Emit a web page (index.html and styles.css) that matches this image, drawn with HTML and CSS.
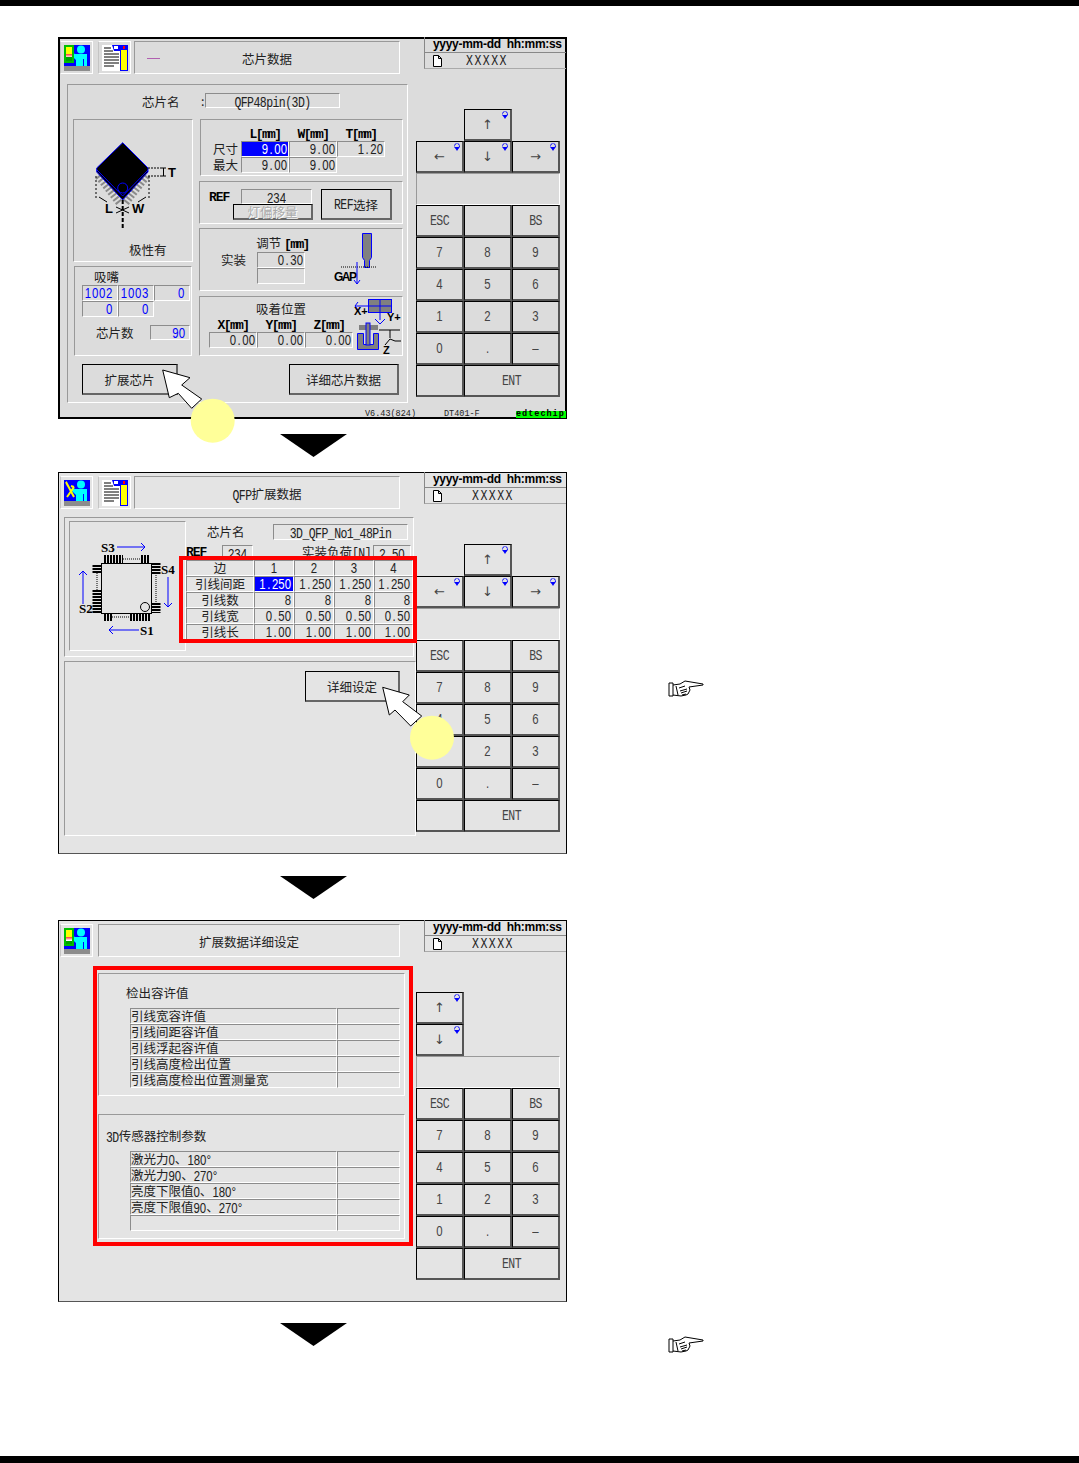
FILE: index.html
```html
<!DOCTYPE html>
<html>
    <head>
        <meta charset="utf-8" />
        <title>QFP扩展数据</title>
        <meta name="viewport" content="width=device-width, initial-scale=1.0" />
        <link rel="stylesheet" href="styles.css">
    </head>

    <body>
        <svg class="defs" width="0" height="0">
            <symbol id="person" viewBox="0 0 26 26">
                <rect width="26" height="21" fill="#0000ff" />
                <rect y="21" width="26" height="5" fill="#8c8c8c" />
                <circle cx="17" cy="4.5" r="4" fill="#00ffff" />
                <path d="M11 9h12v12h-3v-7h-1v7h-7v-6l-5-5 2-2z" fill="#00ffff" />
            </symbol>
            <symbol id="doc" viewBox="0 0 26 26">
                <rect width="26" height="26" fill="#fff" />
                <path d="M2 3h7M2 6h9M2 9h15M2 12h15M2 15h15M2 18h15M2 21h10" stroke="#000" />
                <rect x="18" y="0" width="8" height="26" fill="#0000ff" />
                <path d="M10 0h8v6h-6z" fill="#0000ff" />
                <path d="M12 1h4v3h-4z" fill="#fff" />
                <rect x="19" y="5" width="6" height="20" fill="#ffff00" />
                <rect x="21" y="1" width="2" height="3" fill="#ff0000" />
            </symbol>
            <symbol id="spin" viewBox="0 0 8 8">
                <circle cx="4" cy="3" r="2.500" fill="none" stroke="#0000ff" stroke-dasharray="3 1" />
                <path d="M1.500 4h5L4 8z" fill="#0000ff" />
            </symbol>
            <symbol id="hand" viewBox="0 0 36 18">
                <path d="M1 3h4v13H1z M5 5l7-1 5-3 18 3v1l-14 2 1 3-1 2-1 2-2 1-5 1-8-1"
                    fill="#fff" stroke="#000" stroke-width="1" />
                <path d="M11 8l6-2M12 11l7-2M13 13l6-2M14 15l4-1M8 6l2 9" fill="none" stroke="#000" />
            </symbol>
        </svg>

        <div class="page">
            <div class="bar"></div>

            <!-- 芯片数据 -->
            <section class="screen screen-dark">
                <header class="head">
                    <div class="icon-btn">
                        <svg class="icon" width="26" height="26"><use href="#person" /></svg>
                        <i class="tool tool-panel"></i>
                    </div>
                    <div class="icon-btn">
                        <svg class="icon" width="26" height="26"><use href="#doc" /></svg>
                    </div>
                    <div class="title title-dash"><i class="dash"></i><span>芯片数据</span></div>
                    <div class="status">
                        <div class="status-date">yyyy-mm-dd&nbsp;&nbsp;hh:mm:ss</div>
                        <div class="status-file">
                            <svg class="file" width="11" height="12" viewBox="0 0 11 12"><path d="M1.5.5h5l3 3v8h-8z M6.5.5v3h3" fill="#fff" stroke="#000" /></svg>
                            <span class="n xxxxx xxxxx-first">XXXXX</span>
                        </div>
                    </div>
                </header>

                <div class="body">
                    <div class="pane">
                        <div class="panel panel-main">
                            <div class="name-row">
                                <span class="name-label">芯片名</span>
                                <span class="colon">:</span>
                                <span class="sunk name-field"><span class="n">QFP48pin(3D)</span></span>
                            </div>
                            <div class="columns">
                                <div class="col-left">
                                    <div class="panel chip-box">
                                        <svg class="chip-art" width="118" height="110" viewBox="0 0 118 110">
                                            <path d="M24 56l22 28M73 56L51 84" stroke="#8a8a8a" stroke-width="7" stroke-dasharray="2 2" />
                                            <path d="M48.7 22.7L74 48v4L48.7 80 22.7 52v-4z" fill="#000" stroke="#0000ff" />
                                            <path d="M23 50l25.7 26L74 50" fill="none" stroke="#0000ff" />
                                            <circle cx="48.7" cy="68" r="5" fill="none" stroke="#0000ff" />
                                            <path d="M74 48h13M74 56h13" stroke="#000" stroke-dasharray="2 1" />
                                            <path d="M87 48h5M87 56h5M89.500 48v8" stroke="#000" />
                                            <text class="art-bold" x="94" y="57">T</text>
                                            <path d="M22 56v22M75 56v22" stroke="#000" stroke-dasharray="2 2" />
                                            <path d="M25 77l8 5M72 77l-8 5" stroke="#000" />
                                            <path d="M48.700 80v30" stroke="#000" stroke-width="2" stroke-dasharray="4 2" />
                                            <path d="M42 87l13 6M55 87l-13 6" stroke="#000" />
                                            <text class="art-bold" x="31" y="93">L</text>
                                            <text class="art-bold art-tight" x="58" y="93">W</text>
                                        </svg>
                                        <div class="chip-label">极性有</div>
                                    </div>
                                    <div class="panel nozzle-box">
                                        <div class="nozzle-label">吸嘴</div>
                                        <div class="nozzle-grid">
                                            <span class="sunk cell blue"><span class="d">1002</span></span>
                                            <span class="sunk cell blue"><span class="d">1003</span></span>
                                            <span class="sunk cell blue"><span class="d">0</span></span>
                                            <span class="sunk cell blue"><span class="d">0</span></span>
                                            <span class="sunk cell blue"><span class="d">0</span></span>
                                        </div>
                                        <div class="count-row">
                                            <span class="count-label">芯片数</span>
                                            <span class="sunk cell count-field blue"><span class="d">90</span></span>
                                        </div>
                                    </div>
                                </div>
                                <div class="col-right">
                                    <div class="panel size-box">
                                        <span></span>
                                        <span class="col-head">L[mm]</span>
                                        <span class="col-head">W[mm]</span>
                                        <span class="col-head">T[mm]</span>
                                        <span class="row-label">尺寸</span>
                                        <span class="sunk cell selected"><span class="d">9<i class="dot">.</i>00</span></span>
                                        <span class="sunk cell"><span class="d">9<i class="dot">.</i>00</span></span>
                                        <span class="sunk cell"><span class="d">1<i class="dot">.</i>20</span></span>
                                        <span class="row-label">最大</span>
                                        <span class="sunk cell"><span class="d">9<i class="dot">.</i>00</span></span>
                                        <span class="sunk cell"><span class="d">9<i class="dot">.</i>00</span></span>
                                    </div>
                                    <div class="panel ref-box">
                                        <span class="ref-label">REF</span>
                                        <div class="ref-stack">
                                            <span class="sunk ref-field"><span class="d">234</span></span>
                                            <span class="btn btn-off">灯偏移量</span>
                                        </div>
                                        <span class="btn ref-btn"><span class="n">REF</span>选择</span>
                                    </div>
                                    <div class="panel adj-box">
                                        <span class="adj-head">调节 <b class="unit">[mm]</b></span>
                                        <svg class="adj-art" width="97" height="61" viewBox="0 0 97 61">
                                            <path d="M57.500 4.500h9v24l-2 3v7h-5v-7l-2-3z" fill="#808080" stroke="#0000ff" />
                                            <path d="M36 38h35" stroke="#000" stroke-dasharray="1 1" />
                                            <text class="art-bold art-gap" x="29" y="52">GAP</text>
                                            <path d="M52 33v22M49 51l3 4 3-4" fill="none" stroke="#0000ff" />
                                        </svg>
                                        <span class="adj-label">实装</span>
                                        <span class="sunk cell"><span class="d">0<i class="dot">.</i>30</span></span>
                                        <span class="sunk cell adj-empty"></span>
                                    </div>
                                    <div class="panel pos-box">
                                        <span class="pos-head">吸着位置</span>
                                        <svg class="pos-art" width="49" height="58" viewBox="0 0 49 58">
                                            <rect x="15.500" y="2.500" width="23" height="13" fill="#808080" stroke="#0000ff" />
                                            <path d="M27 2v21M15 9h24M2 9h13M5 5L2 9l3 4M27 27l-5-5M27 27l5-5" fill="none" stroke="#0000ff" />
                                            <text class="art-bold art-small" x="1" y="18">X+</text>
                                            <text class="art-bold art-small" x="34" y="24">Y+</text>
                                            <rect x="6.500" y="28.500" width="18" height="4" fill="#808080" stroke="#808080" />
                                            <path d="M4.500 36.500h6v11h10v-11h5v16h-21z" fill="#808080" stroke="#0000ff" />
                                            <rect x="13" y="26" width="4" height="22" fill="#808080" stroke="#0000ff" />
                                            <path d="M26 33h21M37 33v8M37 42l-5 6M37 42l5 2h6" fill="none" stroke="#000" />
                                            <text class="art-bold art-small" x="30" y="57">Z</text>
                                        </svg>
                                        <span class="col-head">X[mm]</span>
                                        <span class="col-head">Y[mm]</span>
                                        <span class="col-head">Z[mm]</span>
                                        <span class="sunk cell"><span class="d">0<i class="dot">.</i>00</span></span>
                                        <span class="sunk cell"><span class="d">0<i class="dot">.</i>00</span></span>
                                        <span class="sunk cell"><span class="d">0<i class="dot">.</i>00</span></span>
                                    </div>
                                </div>
                            </div>
                            <div class="btn-row">
                                <span class="btn btn-ext">扩展芯片</span>
                                <span class="btn btn-detail">详细芯片数据</span>
                            </div>
                        </div>
                    </div>
                    <div class="keypad">
                        <span class="key key-up"><span class="glyph">↑</span><svg class="spin" width="8" height="8"><use href="#spin" /></svg></span>
                        <span class="key key-first"><span class="glyph">←</span><svg class="spin" width="8" height="8"><use href="#spin" /></svg></span>
                        <span class="key"><span class="glyph">↓</span><svg class="spin" width="8" height="8"><use href="#spin" /></svg></span>
                        <span class="key"><span class="glyph">→</span><svg class="spin" width="8" height="8"><use href="#spin" /></svg></span>
                        <span class="key-blank"></span>
                        <span class="key"><span class="n">ESC</span></span><span class="key"></span><span class="key"><span class="n">BS</span></span>
                        <span class="key"><span class="d">7</span></span><span class="key"><span class="d">8</span></span><span class="key"><span class="d">9</span></span>
                        <span class="key"><span class="d">4</span></span><span class="key"><span class="d">5</span></span><span class="key"><span class="d">6</span></span>
                        <span class="key"><span class="d">1</span></span><span class="key"><span class="d">2</span></span><span class="key"><span class="d">3</span></span>
                        <span class="key"><span class="d">0</span></span><span class="key"><span class="d">.</span></span><span class="key"><span class="d">–</span></span>
                        <span class="key"></span><span class="key key-ent"><span class="n">ENT</span></span>
                    </div>
                </div>

                <footer class="foot">
                    <span class="foot-ver">V6.43(824)</span>
                    <span class="foot-model">DT401-F</span>
                    <span class="foot-tag">edtechip</span>
                </footer>

                <svg class="pointer pointer-ext" width="80" height="78" viewBox="0 0 80 78">
                    <path d="M3.700 4L31 11.700 22.700 19 42.700 33 32.700 42.300 19.300 27.300 10.300 31.700z" fill="#fff" stroke="#000" />
                    <circle cx="53.700" cy="54.700" r="22" fill="#ffff99" />
                </svg>
            </section>

            <div class="arrow-row"><i class="arrow arrow-a"></i></div>

            <!-- QFP扩展数据 -->
            <div class="step">
                <section class="screen">
                    <header class="head">
                        <div class="icon-btn">
                            <svg class="icon" width="26" height="26"><use href="#person" /></svg>
                            <svg class="wrench" width="10" height="18" viewBox="0 0 10 18"><path d="M1 1l8 15M9 6L2 16M1 1l2 4M9 6l-3-1" stroke="#ffff00" stroke-width="2" fill="none" /></svg>
                        </div>
                        <div class="icon-btn">
                            <svg class="icon" width="26" height="26"><use href="#doc" /></svg>
                        </div>
                        <div class="title"><span><span class="n">QFP</span>扩展数据</span></div>
                        <div class="status">
                            <div class="status-date">yyyy-mm-dd&nbsp;&nbsp;hh:mm:ss</div>
                            <div class="status-file">
                                <svg class="file" width="11" height="12" viewBox="0 0 11 12"><path d="M1.5.5h5l3 3v8h-8z M6.5.5v3h3" fill="#fff" stroke="#000" /></svg>
                                <span class="n xxxxx">XXXXX</span>
                            </div>
                        </div>
                    </header>

                    <div class="body">
                        <div class="pane">
                            <div class="panel panel-qfp">
                                <div class="panel qfp-art-box">
                                    <svg width="115" height="128" viewBox="0 0 115 128">
                                        <rect x="31.500" y="41.500" width="50" height="50" fill="#e4e4e4" stroke="#000" />
                                        <path d="M34 37h19M71 37h9M34 95h8M60 95h20" stroke="#000" stroke-width="8" stroke-dasharray="2 1" />
                                        <path d="M53 37h18M42 95h18" stroke="#000" stroke-dasharray="1 1" />
                                        <path d="M27 43v8M27 68v23M86 41v12M86 81v10" stroke="#000" stroke-width="9" stroke-dasharray="2 1" />
                                        <path d="M27 51v17M86 53v28" stroke="#000" stroke-dasharray="1 1" />
                                        <circle cx="75" cy="85" r="4.500" fill="none" stroke="#000" />
                                        <path d="M47 25h28M71 21l4 4-4 4M69 108H39M43 104l-4 4 4 4M13 82V49M9 53l4-4 4 4M98 55v30M94 81l4 4 4-4" fill="none" stroke="#0000ff" />
                                        <text class="art-serif" x="31" y="30">S3</text>
                                        <text class="art-serif" x="91" y="52">S4</text>
                                        <text class="art-serif" x="9" y="91">S2</text>
                                        <text class="art-serif" x="70" y="113">S1</text>
                                    </svg>
                                </div>
                                <div class="qfp-data">
                                    <div class="qfp-name">
                                        <span class="qfp-name-label">芯片名</span>
                                        <span class="sunk qfp-name-field"><span class="n">3D_QFP_No1_48Pin</span></span>
                                    </div>
                                    <div class="qfp-ref">
                                        <b class="qfp-ref-label">REF</b>
                                        <span class="sunk qfp-ref-field"><span class="d">234</span></span>
                                        <span class="qfp-load-label">实装负荷<span class="n">[N]</span></span>
                                        <span class="sunk qfp-load-field"><span class="d">2<i class="dot">.</i>50</span></span>
                                    </div>
                                    <div class="lead-table">
                                        <span class="sunk cell center">边</span>
                                        <span class="sunk cell center"><span class="d">1</span></span>
                                        <span class="sunk cell center"><span class="d">2</span></span>
                                        <span class="sunk cell center"><span class="d">3</span></span>
                                        <span class="sunk cell center"><span class="d">4</span></span>
                                        <span class="sunk cell center">引线间距</span>
                                        <span class="sunk cell selected"><span class="d">1<i class="dot">.</i>250</span></span>
                                        <span class="sunk cell"><span class="d">1<i class="dot">.</i>250</span></span>
                                        <span class="sunk cell"><span class="d">1<i class="dot">.</i>250</span></span>
                                        <span class="sunk cell"><span class="d">1<i class="dot">.</i>250</span></span>
                                        <span class="sunk cell center">引线数</span>
                                        <span class="sunk cell"><span class="d">8</span></span>
                                        <span class="sunk cell"><span class="d">8</span></span>
                                        <span class="sunk cell"><span class="d">8</span></span>
                                        <span class="sunk cell"><span class="d">8</span></span>
                                        <span class="sunk cell center">引线宽</span>
                                        <span class="sunk cell"><span class="d">0<i class="dot">.</i>50</span></span>
                                        <span class="sunk cell"><span class="d">0<i class="dot">.</i>50</span></span>
                                        <span class="sunk cell"><span class="d">0<i class="dot">.</i>50</span></span>
                                        <span class="sunk cell"><span class="d">0<i class="dot">.</i>50</span></span>
                                        <span class="sunk cell center">引线长</span>
                                        <span class="sunk cell"><span class="d">1<i class="dot">.</i>00</span></span>
                                        <span class="sunk cell"><span class="d">1<i class="dot">.</i>00</span></span>
                                        <span class="sunk cell"><span class="d">1<i class="dot">.</i>00</span></span>
                                        <span class="sunk cell"><span class="d">1<i class="dot">.</i>00</span></span>
                                    </div>
                                </div>
                            </div>
                            <div class="panel panel-lower">
                                <span class="btn btn-set">详细设定</span>
                            </div>
                        </div>
                        <div class="keypad">
                            <span class="key key-up"><span class="glyph">↑</span><svg class="spin" width="8" height="8"><use href="#spin" /></svg></span>
                            <span class="key key-first"><span class="glyph">←</span><svg class="spin" width="8" height="8"><use href="#spin" /></svg></span>
                            <span class="key"><span class="glyph">↓</span><svg class="spin" width="8" height="8"><use href="#spin" /></svg></span>
                            <span class="key"><span class="glyph">→</span><svg class="spin" width="8" height="8"><use href="#spin" /></svg></span>
                            <span class="key-blank"></span>
                            <span class="key"><span class="n">ESC</span></span><span class="key"></span><span class="key"><span class="n">BS</span></span>
                            <span class="key"><span class="d">7</span></span><span class="key"><span class="d">8</span></span><span class="key"><span class="d">9</span></span>
                            <span class="key"><span class="d">4</span></span><span class="key"><span class="d">5</span></span><span class="key"><span class="d">6</span></span>
                            <span class="key"><span class="d">1</span></span><span class="key"><span class="d">2</span></span><span class="key"><span class="d">3</span></span>
                            <span class="key"><span class="d">0</span></span><span class="key"><span class="d">.</span></span><span class="key"><span class="d">–</span></span>
                            <span class="key"></span><span class="key key-ent"><span class="n">ENT</span></span>
                        </div>
                    </div>

                    <i class="frame frame-table"></i>
                    <svg class="pointer pointer-set" width="80" height="78" viewBox="0 0 80 78">
                        <path d="M3.700 3.300L30.300 11 23.700 17.700 42.700 32 31.700 42 16 26 10.300 31z" fill="#fff" stroke="#000" />
                        <circle cx="53" cy="53.700" r="22" fill="#ffff99" />
                    </svg>
                </section>
                <svg class="hand hand-step" width="36" height="18"><use href="#hand" /></svg>
            </div>

            <div class="arrow-row"><i class="arrow arrow-b"></i></div>

            <!-- 扩展数据详细设定 -->
            <section class="screen screen-last">
                <header class="head">
                    <div class="icon-btn">
                        <svg class="icon" width="26" height="26"><use href="#person" /></svg>
                        <i class="tool tool-panel"></i>
                    </div>
                    <div class="title title-wide"><span>扩展数据详细设定</span></div>
                    <div class="status">
                        <div class="status-date">yyyy-mm-dd&nbsp;&nbsp;hh:mm:ss</div>
                        <div class="status-file">
                            <svg class="file" width="11" height="12" viewBox="0 0 11 12"><path d="M1.5.5h5l3 3v8h-8z M6.5.5v3h3" fill="#fff" stroke="#000" /></svg>
                            <span class="n xxxxx">XXXXX</span>
                        </div>
                    </div>
                </header>

                <div class="body">
                    <div class="pane pane-detail">
                        <div class="panel detail detail-a">
                            <div class="detail-title">检出容许值</div>
                            <div class="detail-table">
                                <span class="sunk row-name">引线宽容许值</span><span class="sunk"></span>
                                <span class="sunk row-name">引线间距容许值</span><span class="sunk"></span>
                                <span class="sunk row-name">引线浮起容许值</span><span class="sunk"></span>
                                <span class="sunk row-name">引线高度检出位置</span><span class="sunk"></span>
                                <span class="sunk row-name">引线高度检出位置测量宽</span><span class="sunk"></span>
                            </div>
                        </div>
                        <div class="panel detail detail-b">
                            <div class="detail-title"><span class="n">3D</span>传感器控制参数</div>
                            <div class="detail-table">
                                <span class="sunk row-name">激光力<span class="d">0</span>、<span class="d">180°</span></span><span class="sunk"></span>
                                <span class="sunk row-name">激光力<span class="d">90</span>、<span class="d">270°</span></span><span class="sunk"></span>
                                <span class="sunk row-name">亮度下限值<span class="d">0</span>、<span class="d">180°</span></span><span class="sunk"></span>
                                <span class="sunk row-name">亮度下限值<span class="d">90</span>、<span class="d">270°</span></span><span class="sunk"></span>
                                <span class="sunk row-name"></span><span class="sunk"></span>
                            </div>
                        </div>
                    </div>
                    <div class="keypad">
                        <span class="key"><span class="glyph">↑</span><svg class="spin" width="8" height="8"><use href="#spin" /></svg></span>
                        <span class="key key-first"><span class="glyph">↓</span><svg class="spin" width="8" height="8"><use href="#spin" /></svg></span>
                        <span class="key-blank"></span>
                        <span class="key"><span class="n">ESC</span></span><span class="key"></span><span class="key"><span class="n">BS</span></span>
                        <span class="key"><span class="d">7</span></span><span class="key"><span class="d">8</span></span><span class="key"><span class="d">9</span></span>
                        <span class="key"><span class="d">4</span></span><span class="key"><span class="d">5</span></span><span class="key"><span class="d">6</span></span>
                        <span class="key"><span class="d">1</span></span><span class="key"><span class="d">2</span></span><span class="key"><span class="d">3</span></span>
                        <span class="key"><span class="d">0</span></span><span class="key"><span class="d">.</span></span><span class="key"><span class="d">–</span></span>
                        <span class="key"></span><span class="key key-ent"><span class="n">ENT</span></span>
                    </div>
                </div>

                <i class="frame frame-detail"></i>
            </section>

            <div class="arrow-row">
                <i class="arrow arrow-c"></i>
                <svg class="hand hand-last" width="36" height="18"><use href="#hand" /></svg>
            </div>

            <div class="bar bar-bottom"></div>
        </div>
    </body>
</html>
```

FILE: styles.css
```css
* {
    box-sizing: border-box;
}

body {
    margin: 0;
    background: #fff;
    color: #222;
    font-family: "Noto Sans CJK SC", "Liberation Sans", sans-serif;
    font-size: 12.5px;
    line-height: 15px;
}

.defs {
    position: absolute;
}

.page {
    display: flex;
    flex-direction: column;
    width: 1079px;
    height: 1463px;
    overflow: hidden;
}

.bar {
    flex: none;
    height: 6px;
    background: #000;
}

.bar-bottom {
    height: 7px;
    margin-top: auto;
}

/* half-width latin and digits stretched up, as in the machine's bitmap font */
.n,
.d {
    display: inline-block;
    line-height: 11px;
    transform: scaleY(1.25);
}

.n {
    font-family: "Liberation Mono", monospace;
    font-size: 11.500px;
    letter-spacing: -0.55px;
}

.d {
    font-family: "Liberation Sans", sans-serif;
    font-size: 11.400px;
}

.cell .d {
    transform: translateY(-1px) scaleY(1.25);
}

.dot {
    display: inline-block;
    width: 6.350px;
    font-style: normal;
    text-align: center;
}

.step {
    display: flex;
    flex: none;
    margin-top: 15px;
}

.screen {
    position: relative;
    flex: none;
    width: 509px;
    height: 382px;
    margin-left: 58px;
    padding: 3px 0 0 1px;
    border: 1px solid #000;
    border-bottom-color: #555;
    background: #e4e4e4;
}

.screen-dark {
    margin-top: 31px;
    border-bottom-color: #000;
    background: #dcdcdc;
    box-shadow: inset 0 0 0 1px #000;
}

.screen-last {
    margin-top: 21px;
}

.arrow-row {
    display: flex;
    flex: none;
    align-items: flex-start;
}

.arrow {
    flex: none;
    width: 67px;
    height: 23px;
    margin-left: 280px;
    background: #000;
    clip-path: polygon(0 0, 100% 0, 50% 100%);
}

.arrow-a {
    margin-top: 15px;
}

.arrow-b {
    margin-top: 22px;
}

.arrow-c {
    margin-top: 21px;
}

.hand {
    flex: none;
}

.hand-step {
    margin: 208px 0 0 101px;
}

.hand-last {
    margin: 34px 0 0 321px;
}

/* header row */
.head {
    display: flex;
    height: 33px;
}

.icon-btn {
    position: relative;
    flex: none;
    width: 33px;
    height: 33px;
    margin-right: 5px;
    padding: 3px 0 0 3px;
    border: 1px solid;
    border-color: #fff #fff #fff #c4c4c4;
}

.icon-btn + .icon-btn {
    margin-right: 3px;
}

.icon {
    display: block;
}

.tool {
    position: absolute;
    left: 3px;
    top: 3px;
}

.tool-panel {
    width: 10px;
    height: 18px;
    border: 2px solid #00c000;
    background: linear-gradient(#ffff00 50%, #ff3030 50%, #fff 75%, #00a000 75%);
}

.wrench {
    position: absolute;
    left: 4px;
    top: 4px;
}

.title {
    display: grid;
    grid-template-columns: 1fr auto 1fr;
    align-items: center;
    flex: none;
    width: 266px;
    height: 33px;
    padding-top: 1px;
    border: 1px solid;
    border-color: #999 #fff #fff #999;
}

.title > span {
    grid-column: 2;
}

.title-wide {
    width: 302px;
}

.dash {
    grid-row: 1;
    grid-column: 1;
    width: 13px;
    height: 1px;
    margin-left: 12px;
    background: #b060b0;
}

.title-dash > span {
    grid-row: 1;
}

.status {
    flex: none;
    width: 142px;
    height: 32px;
    margin: -4px 0 0 24px;
    border-left: 1px solid #888;
    border-bottom: 1px solid #aaa;
}

.status-date {
    height: 16px;
    padding-left: 8px;
    border-bottom: 1px solid #888;
    color: #000;
    font-family: "Liberation Sans", sans-serif;
    font-size: 12px;
    font-weight: bold;
    letter-spacing: -0.3px;
    white-space: nowrap;
}

.status-file {
    display: flex;
    align-items: center;
    height: 15px;
    padding-left: 7px;
}

.xxxxx {
    margin-left: 29px;
    letter-spacing: 1.500px;
}

.xxxxx-first {
    margin-left: 23px;
}

/* left pane and keypad */
.body {
    display: flex;
}

.pane {
    flex: none;
    width: 356px;
}

.keypad {
    display: grid;
    flex: none;
    grid-template-columns: repeat(3, 48px);
    grid-auto-rows: 32px;
    margin-top: 35px;
}

.key {
    position: relative;
    display: flex;
    align-items: center;
    justify-content: center;
    border-style: solid;
    border-width: 1px 2px 2px 1px;
    border-color: #000 #555 #555 #000;
    color: #444;
}

.glyph {
    font-family: "DejaVu Sans", sans-serif;
    font-size: 13px;
}

.key-up {
    grid-column: 2;
}

.key-first {
    grid-column: 1;
}

.key-blank {
    grid-column: 1 / 4;
    border: 1px solid;
    border-color: #999 #fff #fff #999;
}

.key-ent {
    grid-column: 2 / 4;
}

.spin {
    position: absolute;
    top: 1px;
    right: 1px;
}

.foot {
    display: flex;
    height: 7px;
    margin: 8px 0 0 305px;
    font-family: "Liberation Mono", monospace;
    font-size: 8.500px;
    line-height: 7px;
    white-space: nowrap;
}

.foot-ver {
    width: 79px;
}

.foot-model {
    width: 72px;
}

.foot-tag {
    width: 50px;
    background: #00ff00;
    color: #000;
    font-weight: bold;
    letter-spacing: 1px;
}

.pointer {
    position: absolute;
}

.pointer-ext {
    left: 100px;
    top: 328px;
}

.pointer-set {
    left: 320px;
    top: 211px;
}

.frame {
    position: absolute;
    border: 4px solid #ff0000;
}

.frame-table {
    left: 120px;
    top: 83px;
    width: 238px;
    height: 87px;
}

.frame-detail {
    left: 34px;
    top: 45px;
    width: 320px;
    height: 280px;
}

/* shared pieces */
.panel {
    border: 1px solid;
    border-color: #999 #fff #fff #999;
}

.sunk {
    display: block;
    border: 1px solid;
    border-color: #8c8c8c #fff #fff #8c8c8c;
    white-space: nowrap;
}

.cell {
    height: 100%;
    padding-right: 1px;
    text-align: right;
    line-height: 14px;
}

.center {
    text-align: center;
    padding-right: 0;
}

.selected {
    background: #0000ff;
    color: #fff;
}

.blue {
    padding-right: 4px;
    color: #0000ff;
}

.btn {
    display: flex;
    align-items: center;
    justify-content: center;
    border-style: solid;
    border-width: 1px 2px 2px 1px;
    border-color: #000 #666 #666 #000;
}

.col-head,
.ref-label,
.qfp-ref-label,
.unit {
    color: #000;
    font-family: "Liberation Mono", monospace;
    font-size: 13px;
    font-weight: bold;
    letter-spacing: -1.600px;
}

.col-head {
    align-self: end;
    text-align: center;
    line-height: 13px;
}

.art-bold {
    font-family: "Liberation Sans", sans-serif;
    font-size: 13px;
    font-weight: bold;
    fill: #000;
}

.art-tight {
    letter-spacing: -1px;
}

.art-gap {
    font-size: 12px;
    letter-spacing: -1.500px;
}

.art-small {
    font-size: 11px;
}

.art-serif {
    font-family: "Liberation Serif", serif;
    font-size: 13px;
    font-weight: bold;
    fill: #000;
}

/* chip data screen */
.panel-main {
    width: 341px;
    height: 319px;
    margin: 10px 0 0 7px;
}

.name-row {
    display: flex;
    height: 15px;
    margin-top: 8px;
}

.name-label {
    width: 59px;
    margin-left: 74px;
    padding-top: 1px;
}

.colon {
    width: 4px;
}

.name-field {
    width: 135px;
    line-height: 13px;
    text-align: center;
}

.columns {
    display: flex;
    gap: 6px;
    margin-top: 11px;
    padding-left: 5px;
}

.col-left {
    flex: none;
    width: 120px;
}

.chip-box {
    height: 143px;
}

.chip-art {
    display: block;
}

.chip-label {
    margin-top: 12px;
    padding-left: 55px;
}

.nozzle-box {
    width: 118px;
    height: 90px;
    margin: 4px 0 0 1px;
}

.nozzle-label {
    height: 18px;
    padding: 2px 0 0 19px;
}

.nozzle-grid {
    display: grid;
    grid-template-columns: repeat(3, 36px);
    grid-auto-rows: 16px;
    margin-left: 7px;
}

.nozzle-grid .d {
    letter-spacing: 0.700px;
}

.count-row {
    display: flex;
    height: 15px;
    margin-top: 8px;
}

.count-label {
    width: 54px;
    margin-left: 21px;
}

.count-field {
    width: 40px;
}

.col-right {
    flex: none;
    width: 204px;
}

.size-box {
    display: grid;
    grid-template-columns: 40px 48px 48px 48px;
    grid-template-rows: 21px 16px 16px;
    width: 203px;
    height: 57px;
    margin-left: 1px;
}

.row-label {
    padding-left: 12px;
    white-space: nowrap;
}

.ref-box {
    display: flex;
    height: 43px;
    margin-top: 5px;
    padding: 7px 0 0 9px;
}

.ref-label {
    width: 24px;
    padding-top: 1px;
    letter-spacing: -1.100px;
}

.ref-stack {
    display: flex;
    flex: none;
    flex-direction: column;
    width: 80px;
}

.ref-field {
    width: 71px;
    height: 15px;
    margin-left: 8px;
    line-height: 13px;
    text-align: center;
}

.btn-off {
    height: 16px;
    color: #aaa;
    text-shadow: 1px 1px 0 #fff;
}

.ref-btn {
    flex: none;
    width: 71px;
    height: 31px;
    margin-left: 8px;
}

.adj-box {
    display: grid;
    grid-template-columns: 57px 48px 97px;
    grid-template-rows: 23px 16px 16px;
    height: 63px;
    margin-top: 4px;
}

.adj-head {
    grid-row: 1;
    grid-column: 2;
    align-self: center;
    justify-self: center;
    padding: 6px 0 0 3px;
    white-space: nowrap;
}

.adj-art {
    grid-row: 1 / 4;
    grid-column: 3;
}

.adj-label {
    grid-row: 2;
    grid-column: 1;
    padding-left: 21px;
}

.adj-box .cell {
    grid-column: 2;
}

.adj-empty {
    grid-row: 3;
}

.pos-box {
    display: grid;
    grid-template-columns: 48px 48px 48px 49px;
    grid-template-rows: 19px 16px 16px;
    height: 60px;
    margin-top: 5px;
    padding-left: 9px;
}

.pos-head {
    grid-column: 1 / 4;
    align-self: end;
    text-align: center;
}

.pos-art {
    grid-row: 1 / 4;
    grid-column: 4;
}

.btn-row {
    display: flex;
    margin-top: 8px;
    padding-left: 14px;
}

.btn-ext {
    width: 96px;
    height: 31px;
}

.btn-detail {
    width: 110px;
    height: 31px;
    margin-left: 111px;
}

/* qfp screen */
.panel-qfp {
    display: flex;
    width: 350px;
    height: 140px;
    margin: 8px 0 0 4px;
}

.qfp-art-box {
    flex: none;
    width: 117px;
    height: 130px;
    margin: 3px 0 0 4px;
}

.qfp-art-box svg {
    display: block;
}

.qfp-data {
    flex: none;
    width: 228px;
    margin-top: 6px;
}

.qfp-name {
    display: flex;
    height: 16px;
}

.qfp-name-label {
    width: 66px;
    margin-left: 21px;
}

.qfp-name-field {
    width: 135px;
    line-height: 14px;
    text-align: center;
}

.qfp-ref {
    display: flex;
    height: 15px;
    margin-top: 5px;
}

.qfp-ref-label {
    width: 36px;
    letter-spacing: -1.100px;
}

.qfp-ref-field {
    width: 31px;
    height: 15px;
    line-height: 13px;
    text-align: center;
}

.qfp-load-label {
    width: 71px;
    margin-left: 49px;
    line-height: 14px;
    white-space: nowrap;
}

.qfp-load-field {
    width: 38px;
    height: 15px;
    line-height: 13px;
    text-align: center;
}

.lead-table {
    position: relative;
    display: grid;
    grid-template-columns: 68px 40px 40px 40px 39px;
    grid-auto-rows: 16px;
    background: #e4e4e4;
}

.lead-table .cell {
    padding-right: 2px;
}

.lead-table .center {
    padding-right: 0;
}

.panel-lower {
    width: 352px;
    height: 175px;
    margin: 4px 0 0 4px;
    padding: 9px 0 0 240px;
}

.btn-set {
    width: 95px;
    height: 31px;
}

/* detail screen */
.pane-detail {
    padding: 16px 0 0 38px;
}

.detail {
    width: 307px;
}

.detail-a {
    height: 123px;
    padding: 11px 0 0 31px;
}

.detail-b {
    height: 125px;
    margin-top: 18px;
    padding: 13px 0 0 31px;
}

.detail-title {
    height: 16px;
    margin-bottom: 7px;
    line-height: 16px;
}

.detail-a .detail-title {
    margin-left: -4px;
}

.detail-b .detail-title {
    margin-left: -24px;
}

.detail-table {
    display: grid;
    grid-template-columns: 207px 63px;
    grid-auto-rows: 16px;
}

.row-name {
    line-height: 13px;
}
```
